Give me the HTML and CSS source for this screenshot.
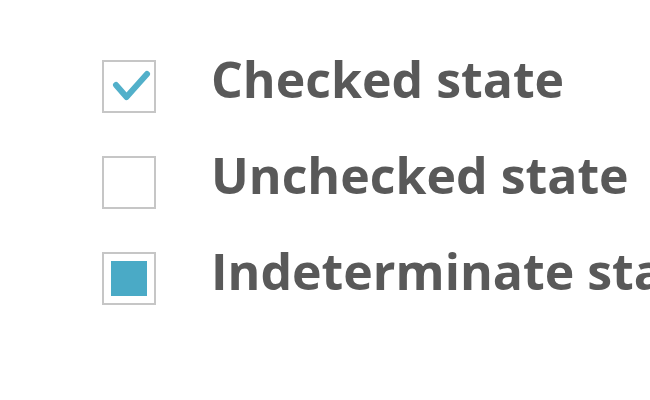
FILE: index.html
```html
<!DOCTYPE html>
<html lang="en">
<head>
    <meta charset="UTF-8">
    <title>Checkbox states</title>
    <link rel="stylesheet" href="styles.css">
</head>
<body>
    <div class="list">
        <div class="item">
            <span class="box">
                <svg class="tick" width="49" height="49" viewBox="0 0 49 49">
                    <path d="M11 23 L21.5 35 L42 12" fill="none" stroke="#52b0ca" stroke-width="6" stroke-linecap="round" stroke-linejoin="round"/>
                </svg>
            </span>
            <span class="label">Checked state</span>
        </div>
        <div class="item">
            <span class="box"></span>
            <span class="label">Unchecked state</span>
        </div>
        <div class="item">
            <span class="box"><span class="fill"></span></span>
            <span class="label">Indeterminate state</span>
        </div>
    </div>
</body>
</html>
```

FILE: styles.css
```css
* {
    margin: 0;
    padding: 0;
    box-sizing: border-box;
}

body {
    background: #fff;
    overflow: hidden;
    font-family: "Open Sans", "Noto Sans", sans-serif;
}

.list {
    display: flex;
    flex-direction: column;
    gap: 43px;
    padding: 60px 0 0 102px;
    white-space: nowrap;
}

.item {
    display: flex;
    align-items: center;
    gap: 55px;
}

.box {
    width: 54px;
    height: 53px;
    border: 2px solid #c6c6c6;
    background: #fff;
    display: flex;
    align-items: center;
    justify-content: center;
    flex-shrink: 0;
}

.fill {
    width: 36px;
    height: 35px;
    background: #4aaac6;
}

.label {
    font-size: 50px;
    font-weight: 700;
    color: #595959;
    line-height: 53px;
    margin-top: -14px;
}
```
